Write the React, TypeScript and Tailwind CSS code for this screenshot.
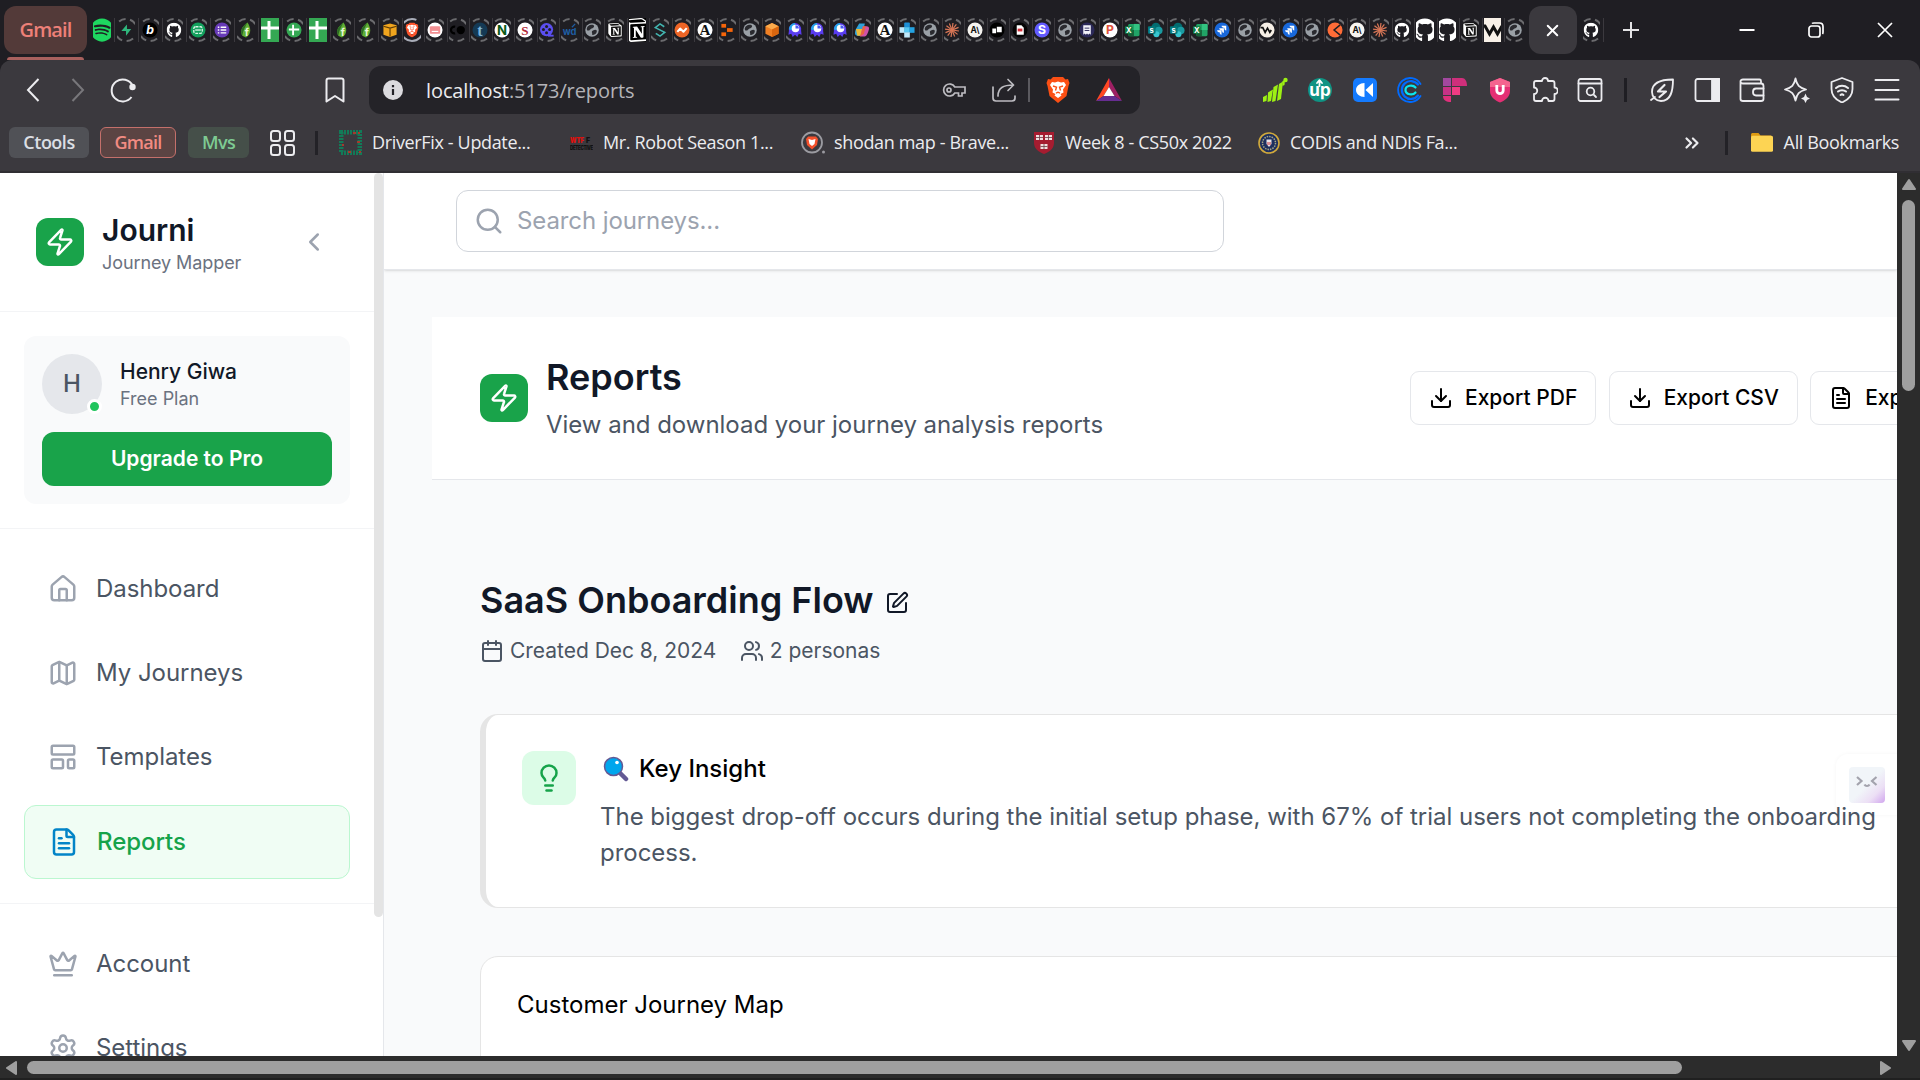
import React from "react";
import {
  Calendar, ChevronLeft, ChevronsRight, Crown, Download, FileText, House,
  Lightbulb, Map as MapIcon, Search, Settings, SquarePen, Users, X, Zap,
} from "lucide-react";
import { FaGithub, FaSpotify } from "react-icons/fa";
import { SiBrave, SiNotion } from "react-icons/si";

const CHROME = "font-['Open_Sans','Noto_Sans',sans-serif]";

/* ---------- Tab favicons (16x16 drawings) ---------- */

function Disc({ bg, fg, t, serif, size = 11, italic }: { bg: string; fg: string; t: string; serif?: boolean; size?: number; italic?: boolean }) {
  return (
    <g>
      <circle cx="8" cy="8" r="8" fill={bg} />
      <text x="8" y={8 + size * 0.36} textAnchor="middle" fontSize={size} fontWeight="700" fontStyle={italic ? "italic" : "normal"} fill={fg} fontFamily={serif ? "Liberation Serif" : "Inter"}>{t}</text>
    </g>
  );
}

const rays = [0, 30, 60, 90, 120, 150];

const glyphs: Record<string, React.ReactNode> = {
  supabase: <path d="M9 2 L3 9 H8 V14 L13.5 7 H9 Z" fill="#2fb67c" />,
  b: <Disc bg="#000" fg="#fff" t="b" size={13} italic />,
  green: (
    <g>
      <circle cx="8" cy="8" r="8" fill="#12a05c" />
      <rect x="3.5" y="4.5" width="9" height="7" rx="2" fill="none" stroke="#d8f5e6" strokeWidth="1.4" strokeDasharray="3 1" />
      <path d="M5 8h6" stroke="#d8f5e6" strokeWidth="1.4" />
    </g>
  ),
  forms: (
    <g>
      <circle cx="8" cy="8" r="8" fill="#673ab7" />
      <path d="M6.5 5h6M6.5 8h6M6.5 11h6M3.5 5h1.6M3.5 8h1.6M3.5 11h1.6" stroke="#fff" strokeWidth="1.5" />
    </g>
  ),
  leaf: (
    <g>
      <path d="M9.5 0 C3 5 1.5 9 4 14 L8 16 C14 12 13.5 6 9.5 0Z" fill="#5fae32" />
      <path d="M9.5 0 C3 5 1.5 9 4 14 C5 8 7 5 9.5 0Z" fill="#2c6b25" />
      <text x="8.8" y="14" textAnchor="middle" fontSize="11" fontWeight="700" fill="#eaf7d8" fontFamily="Inter">f</text>
    </g>
  ),
  sheet: (
    <g>
      <circle cx="8" cy="8" r="8" fill="#34a853" />
      <path d="M7 2.500V13.500M2.500 7.500H13.500" stroke="#fff" strokeWidth="2" />
    </g>
  ),
  amazon: (
    <g>
      <path d="M1 3 L8 1 L15 3 V13 L8 15.500 L1 13Z" fill="#f0a51e" />
      <path d="M1 4 L8 6 L15 4M8 6V15" stroke="#5f3d06" strokeWidth="1.200" fill="none" />
    </g>
  ),
  pink: (
    <g>
      <circle cx="8" cy="8" r="8" fill="#fff" />
      <rect x="2.500" y="4" width="11" height="8" rx="1" fill="#f28f92" />
      <path d="M4.500 9.500h7" stroke="#fff" strokeWidth="1.200" />
    </g>
  ),
  co: (
    <g>
      <path d="M6 4.500A3.600 3.600 0 1 0 6 11.500" stroke="#000" strokeWidth="2.400" fill="none" />
      <circle cx="12" cy="8" r="4.400" fill="#000" />
    </g>
  ),
  t: <Disc bg="#143a55" fg="#7fb4d8" t="t" size={17} serif />,
  nn: <Disc bg="#fff" fg="#0b5a16" t="N" size={14} />,
  ss: <Disc bg="#fff" fg="#b02a37" t="S" size={14} serif />,
  reel: (
    <g>
      <circle cx="7.500" cy="7.500" r="7" fill="#5b4ff0" />
      <circle cx="7.500" cy="4.200" r="1.600" fill="#1f1e23" />
      <circle cx="4.200" cy="7.500" r="1.600" fill="#1f1e23" />
      <circle cx="10.800" cy="7.500" r="1.600" fill="#1f1e23" />
      <circle cx="7.500" cy="10.800" r="1.600" fill="#1f1e23" />
      <path d="M9 14h6" stroke="#5b4ff0" strokeWidth="2" />
    </g>
  ),
  wd: (
    <g>
      <path d="M10 5L13.500 1.500" stroke="#1e5fa5" strokeWidth="1.300" />
      <text x="7.500" y="13" textAnchor="middle" fontSize="10" fontWeight="700" fill="#1e5fa5" fontFamily="Inter">wd</text>
    </g>
  ),
  globe: (
    <g>
      <circle cx="8" cy="8" r="7.200" fill="#9aa0a6" />
      <path d="M7 2.500C11 2 11 5 8.500 6C5 7 6 9 3 8.500C1.500 7 3 3 7 2.500ZM9 8.500C12 7 13.500 8 13 10C12 13 9 13.500 8 13C9 11 6.500 10 9 8.500Z" fill="#2a2a2f" />
    </g>
  ),
  zig: <path d="M12.500 4.500L8 1.500L3 5.500L13 10.500L8 14.500L3.500 11.500" stroke="#42b5b0" strokeWidth="1.700" fill="none" />,
  wave: (
    <g>
      <circle cx="8" cy="8" r="8" fill="#ee6526" />
      <path d="M3 10L6 6.500L9.500 9.800L13 6" stroke="#fff" strokeWidth="2.200" fill="none" strokeLinejoin="round" />
    </g>
  ),
  a: <Disc bg="#fff" fg="#111" t="A" size={16} serif />,
  blocks: (
    <g fill="#f6650a">
      <rect x="2" y="1.500" width="5" height="4" />
      <rect x="8" y="6" width="6" height="4" />
      <rect x="2" y="10.500" width="5" height="4" />
    </g>
  ),
  cube: (
    <g>
      <path d="M8 0.500L15 4V12L8 15.500L1 12V4Z" fill="#f08024" />
      <path d="M8 0.500L15 4L8 7.500L1 4Z" fill="#fbab4c" />
      <path d="M8 7.500L15 4V12L8 15.500Z" fill="#d9660f" />
    </g>
  ),
  octo: (
    <g>
      <path d="M8 0.500A7 7 0 0 1 14.500 9L15 13L12 12L10.500 15.500L8 13L5.500 15.500L4 12L1 13L1.500 9A7 7 0 0 1 8 0.500Z" fill="#5a3df0" />
      <path d="M8 0.500A7 7 0 0 0 1.500 7.500L8 9Z" fill="#25a7e8" />
      <circle cx="8.500" cy="6.500" r="4" fill="#fff" />
      <path d="M8.500 6.500V2.900A3.600 3.600 0 0 1 12.100 6.500Z" fill="#4a5cf0" />
    </g>
  ),
  copilot: (
    <g>
      <path d="M5 1H11L8 14H3C0 14 0 11 1.500 7Z" fill="#2fa1d8" />
      <path d="M1.500 7L3 14H7L9 7Z" fill="#e9b93a" />
      <path d="M9 4H13C16 4 16 7 14.500 10C13 14 12 15 9 15H6Z" fill="#d052a8" />
      <path d="M9 4L12 4L10 12L6 15Z" fill="#e8653f" />
    </g>
  ),
  cross: (
    <g>
      <rect x="5" y="0" width="6" height="5.500" rx="1" fill="#1c8fd6" />
      <rect x="0" y="5" width="5.500" height="6" fill="#bfe9fb" />
      <rect x="5" y="5" width="6" height="6" fill="#57c8f2" />
      <rect x="10.500" y="5" width="5.500" height="6" fill="#24a3e2" />
      <rect x="5" y="10.500" width="6" height="5.500" fill="#bfe9fb" />
    </g>
  ),
  claude: (
    <g stroke="#d97757" strokeWidth="1.300">
      {rays.map((r) => <path key={r} d="M8 0.500V15.500" transform={`rotate(${r + 8} 8 8)`} />)}
    </g>
  ),
  ai: <Disc bg="#f6f4f0" fg="#111" t="A\" size={9} />,
  cards: (
    <g>
      <circle cx="8" cy="8" r="8" fill="#000" />
      <path d="M3 6.500h4v5H3zM7.800 4.500H13v6H7.800z" fill="#fff" />
    </g>
  ),
  pdf: (
    <g>
      <circle cx="8" cy="8" r="8" fill="#050505" />
      <path d="M4.500 3h5L12 5.500V13H4.500z" fill="#fff" />
      <rect x="5.500" y="6.500" width="5" height="3" fill="#d5303a" />
    </g>
  ),
  stripe: <Disc bg="#635bff" fg="#fff" t="S" size={13} />,
  receipt: (
    <g>
      <circle cx="8" cy="8" r="8" fill="#2c2a5a" />
      <path d="M4 3H12V13L10.500 11.800L9.300 13L8 11.800L6.700 13L5.500 11.800L4 13Z" fill="#f2f2fa" />
      <path d="M5.500 6h5M5.500 8.500h5" stroke="#2c2a5a" />
    </g>
  ),
  p: <Disc bg="#fff" fg="#e0523c" t="P" size={13} />,
  excel: (
    <g>
      <rect x="4" y="1.500" width="12" height="13" rx="1.500" fill="#21a366" />
      <rect x="10" y="1.500" width="6" height="6.500" fill="#33c481" />
      <rect x="4" y="8" width="6" height="6.500" fill="#185c37" />
      <rect x="0.500" y="4" width="8" height="8" rx="1" fill="#107c41" />
      <text x="4.500" y="10.800" textAnchor="middle" fontSize="8" fontWeight="700" fill="#fff" fontFamily="Inter">X</text>
    </g>
  ),
  share: (
    <g>
      <circle cx="9" cy="5" r="4.800" fill="#036c70" />
      <circle cx="12" cy="8.500" r="4" fill="#1a9ba1" />
      <circle cx="9.500" cy="12.500" r="3.200" fill="#37c6d0" />
      <rect x="0.500" y="4" width="8" height="8" rx="1" fill="#03787c" />
      <text x="4.500" y="10.800" textAnchor="middle" fontSize="8" fontWeight="700" fill="#fff" fontFamily="Inter">s</text>
    </g>
  ),
  jira: (
    <g>
      <circle cx="8" cy="8" r="8" fill="#1868db" />
      <path d="M7.500 3.500H12.500V8.500C11 8.500 10.500 7.500 10.500 5.700C9 5.700 7.500 5 7.500 3.500ZM5 6H10V11C8.500 11 8 10 8 8.200C6.500 8.200 5 7.500 5 6ZM2.800 8.300H7.500V13C6 13 5.500 12 5.500 10.500C4 10.500 2.800 9.800 2.800 8.300Z" fill="#fff" />
    </g>
  ),
  w: (
    <g>
      <circle cx="8" cy="8" r="8" fill="#f6efe6" />
      <path d="M1 5.500H3.500L6 10.500L8.500 6L11 10.500L12.500 8" stroke="#111" strokeWidth="1.800" fill="none" />
    </g>
  ),
  postman: (
    <g>
      <circle cx="8" cy="8" r="8" fill="#ff6c37" />
      <path d="M13.500 2.500L7 8L13.500 13.500" stroke="#1f1e23" strokeWidth="1.600" fill="none" />
    </g>
  ),
};

const tabs = (
  "SPOTIFY supabase b github green forms leaf SHEET sheet SHEET leaf leaf amazon brave pink co t nn ss reel wd globe notion NOTION zig wave a blocks globe cube octo octo octo copilot a cross globe claude ai cards pdf stripe globe receipt p excel share share excel jira globe w jira globe postman ai claude github GITHUB GITHUB notion W globe"
).split(" ");

function Ring({ solid }: { solid?: boolean }) {
  return <circle cx="12" cy="12" r="11" fill="none" stroke={solid ? "#a9adb8" : "#6b6b6e"} strokeWidth="2" strokeDasharray={solid ? "56 13" : "7 4.520"} strokeDashoffset={solid ? 0 : 2} />;
}

function Favicon({ kind }: { kind: string }) {
  let body: React.ReactNode;
  if (kind === "SPOTIFY") body = <FaSpotify className="size-6 shrink-0 bg-[#1f1e23] text-[#1ed760]" />;
  else if (kind === "GITHUB") body = <FaGithub className="size-6 shrink-0 text-white" />;
  else if (kind === "NOTION") body = <SiNotion className="size-6 shrink-0 bg-black text-white" />;
  else if (kind === "SHEET")
    body = (
      <svg viewBox="0 0 24 24" className="size-6 shrink-0">
        <rect width="24" height="24" fill="#34a853" />
        <path d="M11 3V21M3 10H21" stroke="#fff" strokeWidth="3" />
      </svg>
    );
  else if (kind === "W")
    body = (
      <svg viewBox="0 0 24 24" className="size-6 shrink-0">
        <rect width="24" height="24" fill="#f8f1e8" />
        <path d="M2 8H5L9.500 16L13.500 9L17.500 16L22 8" stroke="#111" strokeWidth="3" fill="none" />
      </svg>
    );
  else
    body = (
      <svg viewBox="0 0 24 24" className="size-6 shrink-0">
        <Ring solid={kind === "brave"} />
        {kind === "github" && <FaGithub x="4.500" y="4.500" width="15" height="15" size={15} color="#fff" />}
        {kind === "notion" && (
          <g>
            <rect x="4.500" y="4.500" width="15" height="15" rx="3" fill="#111" />
            <SiNotion x="5" y="5" size={14} color="#fff" />
          </g>
        )}
        {kind === "brave" && (
          <g>
            <path d="M7 6H17V12L15 16H9L7 12Z" fill="#fff" />
            <SiBrave x="4.500" y="4.500" size={15} color="#fb542b" />
          </g>
        )}
        {glyphs[kind] && <g transform="translate(4.500 4.500) scale(0.940)">{glyphs[kind]}</g>}
      </svg>
    );
  return <div className="flex h-6 w-[17.500px] items-center justify-center overflow-hidden">{body}</div>;
}

function TabStrip() {
  return (
    <div className="flex h-[60px] items-center bg-[#1f1e23]">
      <div className="relative ml-1 mr-[6px] flex h-12 w-[83px] items-center justify-center rounded-xl bg-[#533a39]">
        <span className="text-[20px] font-semibold tracking-[-0.900px] text-[#ee8078]">Gmail</span>
        <div className="absolute -bottom-[6px] left-[3px] h-[3px] w-[77px] rounded-t bg-[#a8615e]" />
      </div>
      <div className="flex">
        {tabs.map((k, i) => (
          <div key={i} className={i < 12 ? "flex w-6 items-center justify-between pr-[2px]" : "flex w-[22.500px] items-center justify-between pr-[1px]"}>
            <Favicon kind={k} />
            <div className={i === 62 ? "w-px" : "h-6 w-px bg-[#3b393e]"} />
          </div>
        ))}
      </div>
      <div className="flex h-12 w-12 items-center justify-center rounded-xl bg-[#3b393e]">
        <X className="size-[19px] text-white" strokeWidth={2.500} />
      </div>
      <div className="ml-[6px] flex items-center gap-[3px]">
        <Favicon kind="github" />
        <div className="h-6 w-px bg-[#3b393e]" />
      </div>
      <svg viewBox="0 0 16 16" className="ml-[19px] size-4 text-[#e4e4e6]"><path d="M8 0V16M0 8H16" stroke="currentColor" strokeWidth="2" /></svg>
      <div className="ml-auto flex items-center pr-[27px] text-white">
        <svg viewBox="0 0 16 16" className="mr-[53px] size-4"><path d="M0.500 8H15.500" stroke="currentColor" strokeWidth="2" /></svg>
        <svg viewBox="0 0 16 16" fill="none" stroke="currentColor" strokeWidth="1.700" className="mr-[53px] size-4">
          <rect x="1" y="4" width="11" height="11" rx="2.500" />
          <path d="M4 1.500C4.500 1 5 1 6 1H11.500C14 1 15 2 15 4.500V10C15 11 15 11.500 14.500 12" />
        </svg>
        <svg viewBox="0 0 16 16" className="size-4"><path d="M1 1L15 15M15 1L1 15" stroke="currentColor" strokeWidth="1.700" /></svg>
      </div>
    </div>
  );
}

function Ext({ children }: { children: React.ReactNode }) {
  return (
    <div className="flex w-[45px] shrink-0 justify-center">
      <svg viewBox="0 0 26 26" fill="none" stroke="#ececef" strokeWidth="1.800" strokeLinecap="round" strokeLinejoin="round" className="size-[26px]">{children}</svg>
    </div>
  );
}

function Toolbar() {
  return (
    <div className="flex h-[60px] items-center text-[#ececef]">
      <div className="flex w-[45px] justify-center pl-[20px]">
        <svg viewBox="0 0 14 24" fill="none" stroke="currentColor" strokeWidth="2" className="h-6 w-[14px] shrink-0"><path d="M12.500 1L2 12L12.500 23" /></svg>
      </div>
      <svg viewBox="0 0 14 24" fill="none" stroke="#78777b" strokeWidth="2" className="ml-[26px] h-6 w-[14px]"><path d="M1.500 1L12 12L1.500 23" /></svg>
      <svg viewBox="0 0 26 26" fill="none" stroke="currentColor" strokeWidth="2" className="ml-[25px] size-[26px]">
        <path d="M21.500 20A11 11 0 1 1 22.500 8.500" />
        <circle cx="22.500" cy="10" r="3.200" fill="currentColor" stroke="none" />
      </svg>
      <svg viewBox="0 0 20 26" fill="none" stroke="currentColor" strokeWidth="2" strokeLinejoin="round" className="ml-[189px] h-[26px] w-5">
        <path d="M1.500 3.500C1.500 2 2 1.500 3.500 1.500H16.500C18 1.500 18.500 2 18.500 3.500V24.500L10 19L1.500 24.500Z" />
      </svg>
      <div className="ml-[24px] flex h-12 w-[771px] items-center rounded-xl bg-[#242328] pl-[14px]">
        <svg viewBox="0 0 20 20" className="size-5">
          <circle cx="10" cy="10" r="10" fill="#dcdbdf" />
          <path d="M10 9V15M10 5V7.200" stroke="#242328" strokeWidth="2.200" />
        </svg>
        <span className="mt-px ml-[23px] w-[509px] text-[20px] tracking-[-0.100px] text-[#b4b3b8]"><span className="text-[#ececef]">localhost</span>:5173/reports</span>
        <svg viewBox="0 0 24 14" fill="none" stroke="#bdbcc1" strokeWidth="1.700" className="ml-[7px] h-[14px] w-6">
          <path d="M12.800 4A6 6 0 1 0 12.800 10H16.500V13H20V10H23V4Z" />
          <circle cx="7" cy="7" r="2" />
        </svg>
        <svg viewBox="0 0 24 24" fill="none" stroke="#bdbcc1" strokeWidth="1.700" strokeLinecap="round" strokeLinejoin="round" className="ml-[26px] size-6">
          <path d="M1 9V20C1 22 2 23 4 23H20C22 23 23 22 23 20V18" />
          <path d="M6 18C6 10 11 7 21.500 7M16 1.500L21.500 7L16 12.500" />
        </svg>
        <div className="ml-[12px] h-6 w-[2px] bg-[#5b5a5f]" />
        <svg viewBox="0 0 24 28" className="ml-[16px] h-7 w-6">
          <path d="M7 1H17L19.500 3.500L22 3L23.500 7L22.500 10L20.500 20L12 27L3.500 20L1.500 10L0.500 7L2 3L4.500 3.500Z" fill="#fb4f14" />
          <path d="M6 6L9 6.500L12 5.500L15 6.500L18 6L20 9L17 13.500L17.500 16.500L14.500 18L15.500 19.500L12 22L8.500 19.500L9.500 18L6.500 16.500L7 13.500L4 9Z" fill="#fff" />
          <path d="M7 10L10.500 11.200L9.500 14.500M17 10L13.500 11.200L14.500 14.500M10 17.200L12 16.200L14 17.200" stroke="#fb4f14" strokeWidth="1.400" fill="none" />
        </svg>
        <svg viewBox="0 0 26 24" className="ml-[26px] h-6 w-[26px]">
          <path d="M13 0L0 23L7.500 18L13 9Z" fill="#ff4724" />
          <path d="M13 0L26 23L18.500 18L13 9Z" fill="#9e1f63" />
          <path d="M0 23H26L18.500 18H7.500Z" fill="#662d91" />
          <path d="M13 9L18.500 18H7.500Z" fill="#fff" />
        </svg>
      </div>
      <div className="ml-auto flex items-center pr-[11px]">
        <Ext>
          <g fill="#9df013" stroke="none">
            <path d="M1 20L5 18L4.500 24L1 25Z" />
            <path d="M6 15.500L11 12.500L9 24L5.500 25Z" />
            <path d="M11.500 10L16 7.500L13.500 24L10 25Z" />
            <path d="M17 7L21 4.500L19 22L15 24Z" />
            <path d="M20.500 4L23 3L22.500 8L20.500 9Z" />
            <circle cx="23.500" cy="3" r="2.200" />
          </g>
        </Ext>
        <Ext>
          <circle cx="13" cy="13" r="12" fill="#0f9383" stroke="none" />
          <path d="M12.500 9V3.500M10 6L12.500 3.200L15 6" stroke="#fff" strokeWidth="1.800" />
          <text x="13" y="18.500" textAnchor="middle" fontSize="17" fontWeight="700" fill="#fff" stroke="none" fontFamily="Inter">up</text>
        </Ext>
        <Ext><rect x="1" y="1" width="24" height="24" rx="5" fill="#147bff" stroke="none" /><path d="M12.500 6V20C8 20 4 17 4 13S8 6 12.500 6ZM21 6V20L13.500 13Z" fill="#fff" stroke="none" /></Ext>
        <Ext>
          <path d="M23.500 7A12 12 0 1 0 23.500 19" stroke="#006bff" strokeWidth="1.800" />
          <path d="M21 7.500A9 9 0 1 0 21 18.500" stroke="#006bff" strokeWidth="2.200" />
          <path d="M18.500 10.500C16 7.500 8.500 8 8.500 13S16 18.500 18.500 15.500" stroke="#0ae8f0" strokeWidth="2.200" />
        </Ext>
        <Ext>
          <g stroke="none">
            <rect x="1" y="1" width="8" height="8" fill="#a2489f" />
            <path d="M10 1H20C23 1 25 4 25 9H10Z" fill="#cf2f7b" />
            <rect x="1" y="10" width="8" height="8" fill="#c73286" />
            <rect x="10" y="10" width="8" height="8" fill="#f03c84" />
            <path d="M1 19H9V25C4 25 1 23 1 19Z" fill="#e02f7b" />
          </g>
        </Ext>
        <Ext>
          <path d="M13 1L23 5V14C23 20 18 23.500 13 25.500C8 23.500 3 20 3 14V5Z" fill="#e52f74" stroke="none" />
          <path d="M13 1L23 5V10H3V5Z" fill="#f4648f" stroke="none" />
          <path d="M9.800 8V13.500A3.200 3.200 0 0 0 16.200 13.500V8" stroke="#fff" strokeWidth="2.800" strokeLinecap="butt" />
        </Ext>
        <Ext><path d="M10 4A3 3 0 0 1 16 4H20.500C22 4 22.500 4.500 22.500 6V10.500A3 3 0 0 1 22.500 17V22C22.500 23.500 22 24 20.500 24H16.500A3 3 0 0 0 10 24H4C2.500 24 2 23.500 2 22V17A3 3 0 0 0 2 10.500V6C2 4.500 2.500 4 4 4Z" /></Ext>
        <Ext><rect x="1.500" y="2" width="23" height="22" rx="2" /><path d="M1.500 6.500H24.500M17 18L19 20" /><circle cx="13.500" cy="14.500" r="3.800" /></Ext>
        <div className="ml-[12px] mr-[12px] h-6 w-[3px] bg-[#1f1e23]" />
        <Ext><path d="M24 2.500C24 14 22 24 12 24C7 24 3 20 3 15C3 5 14 2.500 24 2.500ZM2 23L6 20" /><path d="M15.500 8L9 14.500H17L10.500 20" strokeWidth="2.200" /></Ext>
        <Ext><rect x="1.500" y="2" width="24" height="22" rx="2" /><rect x="18" y="2" width="7.500" height="22" fill="#ececef" /></Ext>
        <Ext><path d="M1.500 4V22C1.500 23.500 2.500 24 4 24H22C24 24 24.500 23 24.500 22V9C24.500 8 24 6.500 22 6.500H4C2 6.500 1.500 5.500 1.500 4.500C1.500 3 2.500 2.500 4 2.500H20.500C21.500 2.500 22 3 22 4V6.500" /><path d="M24.500 11.500H17C15 11.500 14 13 14 15S15 18.500 17 18.500H24.500" /></Ext>
        <Ext><path d="M11.500 1.500C13 8.500 15 10.500 22 12.500C15 14.500 13 16.500 11.500 23.500C10 16.500 8 14.500 1 12.500C8 10.500 10 8.500 11.500 1.500Z" /><path d="M21.500 16.500L23 20L26 21.500L23 23L21.500 26L20 23L17 21.500L20 20Z" fill="#ececef" stroke="none" /></Ext>
        <Ext><path d="M13 1L23.500 5V12C23.500 18.500 19 23 13 25.500C7 23 2.500 18.500 2.500 12V5Z" /><path d="M7 11C10.500 8 15.500 8 19 11M9 14.500C11 12.700 15 12.700 17 14.500M11.500 18C12.500 17.200 13.500 17.200 14.500 18" strokeWidth="2" /></Ext>
        <Ext><path d="M1.500 3H24.500M1.500 13H24.500M1.500 22.500H24.500" strokeWidth="2" /></Ext>
      </div>
    </div>
  );
}

function Bookmark({ icon, label, className }: { icon: React.ReactNode; label: string; className: string }) {
  return (
    <div className={`flex shrink-0 items-center gap-[10px] ${className}`}>
      <div className="flex w-[23px] shrink-0 justify-center">{icon}</div>
      <span className="whitespace-nowrap">{label}</span>
    </div>
  );
}

function BookmarksBar() {
  return (
    <div className="flex h-[45px] items-center text-[18px] tracking-[-0.350px] text-[#ececef]">
      <div className="ml-[9px] flex h-[31px] w-20 items-center justify-center rounded-md bg-[#505156] font-semibold tracking-[-0.500px] text-[#dcdfe4]">Ctools</div>
      <div className="ml-[11px] flex h-[31px] w-[76px] items-center justify-center rounded-md border border-[#c4706b] bg-[#5b4443] font-semibold tracking-[-0.700px] text-[#f28b82]">Gmail</div>
      <div className="ml-[12px] flex h-[31px] w-[61px] items-center justify-center rounded-md bg-[#454f49] font-semibold tracking-[-0.600px] text-[#7ecb93]">Mvs</div>
      <svg viewBox="0 0 25 26" fill="none" stroke="#ececef" strokeWidth="2" className="ml-[21px] h-[26px] w-[25px]">
        <rect x="1" y="1" width="9" height="10" rx="2.500" /><rect x="15" y="1" width="9" height="10" rx="2.500" />
        <rect x="1" y="15" width="9" height="10" rx="2.500" /><rect x="15" y="15" width="9" height="10" rx="2.500" />
      </svg>
      <div className="ml-5 h-6 w-[3px] bg-[#232227]" />
      <Bookmark className="ml-[21px] w-[231px]" label="DriverFix - Update..." icon={
        <svg viewBox="0 0 23 25" className="h-[25px] w-[23px]">
          <rect x="2" y="2" width="19" height="21" fill="none" stroke="#127a58" strokeWidth="5" strokeDasharray="2 1" />
          <path d="M14 3h3M18 12h3M3 15h2M9 22h3M19 3h2M20 22h2" stroke="#a8392c" strokeWidth="2" />
        </svg>
      } />
      <Bookmark className="w-[231px]" label="Mr. Robot Season 1..." icon={
        <svg viewBox="0 0 23 14" className="h-[14px] w-[23px]">
          <text x="0" y="7" fontSize="8" fontWeight="900" fill="#e0100d" fontFamily="Inter" letterSpacing="0" textLength="14" lengthAdjust="spacingAndGlyphs">WTF</text>
          <text x="16" y="7" fontSize="7" fontWeight="900" fill="#111" fontFamily="Inter">F</text>
          <text x="0" y="13.500" fontSize="5.500" fontWeight="900" fill="#111" fontFamily="Inter" textLength="23" lengthAdjust="spacingAndGlyphs">DETECTIVE</text>
        </svg>
      } />
      <Bookmark className="w-[231px]" label="shodan map - Brave..." icon={
        <svg viewBox="0 0 24 24" className="size-6 shrink-0">
          <circle cx="11" cy="11.500" r="10" fill="none" stroke="#9b9ba1" strokeWidth="1.800" />
          <path d="M7 5.500H15L17 8L16 14L11 18.500L6 14L5 8Z" fill="#f4512c" />
          <path d="M7.500 8L11 9L14.500 8L13.500 13L11 15L8.500 13Z" fill="#fff" />
          <circle cx="22.500" cy="21" r="1.500" fill="#9b9ba1" />
        </svg>
      } />
      <Bookmark className="w-[225px]" label="Week 8 - CS50x 2022" icon={
        <svg viewBox="0 0 20 22" className="h-[22px] w-5">
          <path d="M0 0H20V11C20 17 15 20 10 22C5 20 0 17 0 11Z" fill="#a51c30" />
          <path d="M2 5.500h7M11 5.500h7M6.500 14.500h7" stroke="#f0dfe0" strokeWidth="5" />
          <path d="M5.500 3v5M14.500 3v5M10 12v5M2 5.500h7M11 5.500h7M6.500 14.500h7" stroke="#6b3a42" strokeWidth="0.800" />
        </svg>
      } />
      <Bookmark className="w-[224px]" label="CODIS and NDIS Fa..." icon={
        <svg viewBox="0 0 22 22" className="size-[22px]">
          <circle cx="11" cy="11" r="10" fill="#1d2f5e" stroke="#d0a93c" strokeWidth="1.600" />
          <circle cx="11" cy="11" r="6.500" fill="none" stroke="#a8a784" strokeWidth="1.500" strokeDasharray="1.500 1" />
          <path d="M8.500 7.500H13.500V12L11 15L8.500 12Z" fill="#e8e6ea" />
          <path d="M10 10v3M12 10v3" stroke="#c3323a" />
        </svg>
      } />
      <div className="ml-auto flex items-center pr-[21px]">
        <ChevronsRight className="size-[22px]" strokeWidth={2.400} />
        <div className="ml-[22px] h-6 w-[3px] bg-[#232227]" />
        <Bookmark className="ml-[23px]" label="All Bookmarks" icon={
          <svg viewBox="0 0 22 19" className="h-[19px] w-[22px]">
            <path d="M0 2C0 0.500 0.500 0 2 0H7.500L9.500 2.500H20V8H0Z" fill="#dd9a12" />
            <rect x="0" y="2.800" width="22" height="16" rx="1.500" fill="#fdd453" />
          </svg>
        } />
      </div>
    </div>
  );
}

/* ---------- Journi application ---------- */

function LogoBox() {
  return (
    <div className="flex size-12 shrink-0 items-center justify-center rounded-xl bg-[#19a34a]">
      <Zap className="size-[30px] text-white" />
    </div>
  );
}

const itemBase = "flex items-center gap-[18px] rounded-xl pl-6 text-2xl tracking-[-0.050px]";

function NavItem({ icon: Icon, label, active }: { icon: React.ElementType; label: string; active?: boolean }) {
  return (
    <div className={active ? `${itemBase} h-[74px] border border-[#bbf7d0] bg-[#f0fdf4] font-medium text-[#16a34a]` : `${itemBase} h-[72px] text-[#4b5563]`}>
      <Icon className={active ? "size-[30px] text-[#0284c7]" : "size-[30px] text-[#9ca3af]"} />
      <span>{label}</span>
    </div>
  );
}

function TemplateIcon({ className }: { className?: string }) {
  return (
    <svg viewBox="0 0 24 24" fill="none" stroke="currentColor" strokeWidth="2" strokeLinecap="round" strokeLinejoin="round" className={className}>
      <rect width="18" height="7" x="3" y="3" rx="1" />
      <rect width="9" height="7" x="3" y="14" rx="1" />
      <rect width="5" height="7" x="16" y="14" rx="1" />
    </svg>
  );
}

function Sidebar() {
  return (
    <aside className="flex w-96 shrink-0 overflow-hidden border-r border-[#e5e7eb] bg-white">
      <div className="w-[374px] shrink-0">
        <div className="flex h-[139px] items-center border-b border-[#f3f4f6] pl-9">
          <LogoBox />
          <div className="mt-[3px] ml-[18px] w-[197px]">
            <div className="text-[30px] leading-[36px] font-semibold text-[#111827]">Journi</div>
            <div className="mt-[3px] text-[18px] leading-6 tracking-[-0.080px] text-[#6b7280]">Journey Mapper</div>
          </div>
          <ChevronLeft className="size-[30px] text-[#9ca3af]" />
        </div>
        <div className="h-[217px] border-b border-[#f3f4f6] p-6">
          <div className="h-[168px] rounded-xl bg-[#f9fafb] p-[18px]">
            <div className="flex items-center gap-[18px]">
              <div className="relative flex size-[60px] items-center justify-center rounded-full bg-[#e5e7eb] text-2xl font-medium text-[#4b5563]">
                H
                <div className="absolute right-0 bottom-0 size-[15px] rounded-full border-[3px] border-white bg-[#22c55e]" />
              </div>
              <div>
                <div className="text-[21px] leading-[30px] font-medium text-[#111827]">Henry Giwa</div>
                <div className="text-[18px] leading-6 text-[#6b7280]">Free Plan</div>
              </div>
            </div>
            <div className="mt-[18px] flex h-[54px] items-center justify-center rounded-xl bg-[#19a34a] text-[21px] font-semibold text-white">Upgrade to Pro</div>
          </div>
        </div>
        <nav className="flex flex-col gap-3 border-b border-[#f3f4f6] p-6">
          <NavItem icon={House} label="Dashboard" />
          <NavItem icon={MapIcon} label="My Journeys" />
          <NavItem icon={TemplateIcon} label="Templates" />
          <NavItem icon={FileText} label="Reports" active />
        </nav>
        <nav className="flex flex-col gap-3 p-6">
          <NavItem icon={Crown} label="Account" />
          <NavItem icon={Settings} label="Settings" />
        </nav>
      </div>
      <div className="h-[744px] w-[9px] rounded-full bg-[#e4e4e4]" />
    </aside>
  );
}

function ExportButton({ icon: Icon, label }: { icon: React.ElementType; label: string }) {
  return (
    <div className="flex h-[54px] shrink-0 items-center gap-3 rounded-[9px] border border-[#e5e7eb] bg-white px-[18px] text-[21px] font-medium whitespace-nowrap text-black">
      <Icon className="size-6" />
      {label}
    </div>
  );
}

function Main() {
  return (
    <main className="relative w-[1513px] shrink-0 overflow-hidden bg-[#f9fafb]">
      <div className="flex h-[97px] items-center border-b border-[#e5e7eb] bg-white pl-[72px] shadow-sm">
        <div className="flex h-[62px] w-[768px] items-center gap-[13px] rounded-xl border border-[#d1d5db] pl-[17px] text-2xl tracking-[-0.100px] text-[#9ca3af]">
          <Search className="size-[30px]" />
          Search journeys...
        </div>
      </div>
      <div className="mt-[47px] ml-12 flex h-[163px] w-[1700px] items-center border-b border-[#e5e7eb] bg-white pl-12">
        <LogoBox />
        <div className="ml-[18px] w-[864px]">
          <h1 className="text-[36px] leading-[48px] font-semibold text-[#111827]">Reports</h1>
          <p className="mt-[6px] text-2xl leading-9 tracking-[-0.025px] text-[#4b5563]">View and download your journey analysis reports</p>
        </div>
        <div className="flex gap-[12.400px]">
          <ExportButton icon={Download} label="Export PDF" />
          <ExportButton icon={Download} label="Export CSV" />
          <ExportButton icon={FileText} label="Export Docs" />
        </div>
      </div>
      <div className="mt-24 ml-24 w-[1600px]">
        <div className="flex items-center gap-3 text-[#111827]">
          <h2 className="text-[36px] leading-[48px] font-semibold">SaaS Onboarding Flow</h2>
          <SquarePen className="mt-[6px] -ml-px size-6" />
        </div>
        <div className="mt-[12px] flex h-[30px] items-center text-[21px] tracking-[-0.020px] text-[#4b5563]">
          <Calendar className="size-6" />
          <span className="ml-[6px]">Created Dec 8, 2024</span>
          <Users className="ml-[23.500px] size-6" />
          <span className="ml-[6px]">2 personas</span>
        </div>
        <section className="mt-12 flex h-[194px] rounded-[18px] border border-l-[6px] border-[#e5e5e5] bg-white pt-9 pl-9">
          <div className="flex size-[54px] shrink-0 items-center justify-center rounded-xl bg-[#dcfce7]">
            <Lightbulb className="size-[30px] text-[#16a34a]" />
          </div>
          <div className="ml-6">
            <div className="flex h-9 items-center text-2xl font-medium text-black">
              <svg viewBox="0 0 26 26" className="ml-[3px] mr-[10px] size-[26px]">
                <path d="M17 17L23 23" stroke="#635994" strokeWidth="4.500" strokeLinecap="round" />
                <circle cx="10.500" cy="10.500" r="9" fill="#00a6ed" stroke="#635994" strokeWidth="1.500" />
                <circle cx="14" cy="6.500" r="1.800" fill="#fff" />
              </svg>
              Key Insight
            </div>
            <p className="mt-3 w-[1290px] text-2xl leading-9 tracking-[-0.020px] text-[#4b5563]">
              The biggest drop-off occurs during the initial setup phase, with 67% of trial users not completing the onboarding<br />process.
            </p>
          </div>
        </section>
        <section className="mt-12 h-[300px] rounded-[18px] border border-[#e5e5e5] bg-white p-9 pt-[30px] text-2xl leading-9 text-black">
          Customer Journey Map
        </section>
      </div>
      <div className="absolute top-[581px] left-[1452px] flex h-[61px] w-24 items-center rounded-l-xl pl-[13px] shadow-[0_0_4px_rgba(0,0,0,0.04)]">
        <svg viewBox="0 0 36 36" className="size-9">
          <defs>
            <linearGradient id="face" x1="0" y1="0" x2="1" y2="1">
              <stop offset="0.500" stopColor="#f1f5f9" />
              <stop offset="0.750" stopColor="#ecdff5" />
              <stop offset="1" stopColor="#d0a5ee" />
            </linearGradient>
          </defs>
          <rect width="36" height="36" rx="4" fill="url(#face)" />
          <path d="M8 10L12.500 14L8 18M27.500 10L23 14L27.500 18M15.500 17.500C16.500 19.500 19.500 19.500 20.500 17.500" stroke="#a3a3ad" strokeWidth="2.200" fill="none" />
        </svg>
      </div>
    </main>
  );
}

function Arrow({ d, className }: { d: string; className?: string }) {
  return <svg viewBox="0 0 14 14" className={`size-[14px] shrink-0 ${className ?? ""}`}><path d={d} fill="#9f9f9f" stroke="#9f9f9f" strokeWidth="2" strokeLinejoin="round" /></svg>;
}

export default function App() {
  return (
    <div className={`flex h-[1080px] w-[1920px] flex-col overflow-hidden bg-[#1f1e23] ${CHROME}`}>
      <TabStrip />
      <div className="h-[113px] shrink-0 rounded-t-xl border-b-2 border-[#302e33] bg-[#3b393e]">
        <Toolbar />
        <BookmarksBar />
      </div>
      <div className="flex h-[883px] shrink-0 overflow-hidden font-['Inter',sans-serif]">
        <Sidebar />
        <Main />
        <div className="flex w-[23px] shrink-0 flex-col items-center bg-[#2c2c2c]">
          <Arrow d="M7 2L13 11H1Z" className="mt-[5px]" />
          <div className="mt-[8px] h-[191px] w-[13px] rounded-full bg-[#9f9f9f]" />
          <Arrow d="M7 12L13 3H1Z" className="mt-auto mb-[4px]" />
        </div>
      </div>
      <div className="flex h-6 shrink-0 items-center border-b-2 border-[#202020] bg-[#2c2c2c]">
        <Arrow d="M2 7L11 13V1Z" className="mt-px ml-[5px]" />
        <div className="mt-px ml-[8px] h-[13px] w-[1655px] rounded-full bg-[#9f9f9f]" />
        <Arrow d="M12 7L3 13V1Z" className="mt-px ml-[196px]" />
      </div>
    </div>
  );
}
